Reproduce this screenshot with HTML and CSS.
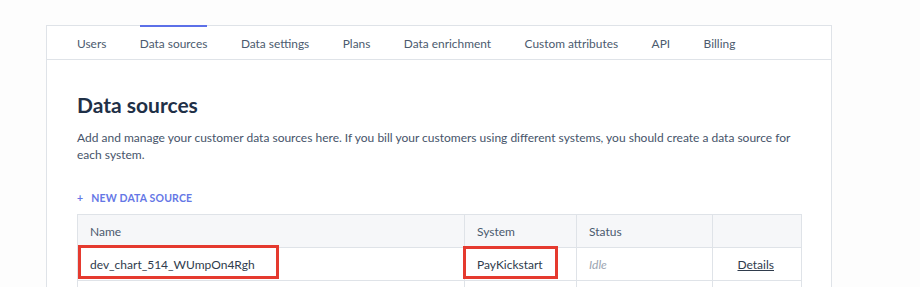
FILE: index.html
```html
<!DOCTYPE html>
<html>
<head>
<meta charset="utf-8">
<link rel="stylesheet" href="styles.css">
</head>
<body>
<div class="page">
  <div class="card">
    <nav class="tabs">
      <span class="tab">Users</span>
      <span class="tab active">Data sources</span>
      <span class="tab">Data settings</span>
      <span class="tab">Plans</span>
      <span class="tab">Data enrichment</span>
      <span class="tab">Custom attributes</span>
      <span class="tab">API</span>
      <span class="tab">Billing</span>
    </nav>
    <div class="content">
      <h1 class="title">Data sources</h1>
      <p class="desc">Add and manage your customer data sources here. If you bill your customers using different systems, you should create a data source for each system.</p>
      <div class="new-btn"><span class="plus">+</span>NEW DATA SOURCE</div>
      <div class="table-wrap">
        <table class="table">
          <colgroup>
            <col class="c-name"><col class="c-system"><col class="c-status"><col class="c-actions">
          </colgroup>
          <thead>
            <tr><th>Name</th><th>System</th><th>Status</th><th></th></tr>
          </thead>
          <tbody>
            <tr>
              <td>dev_chart_514_WUmpOn4Rgh</td>
              <td>PayKickstart</td>
              <td class="idle">Idle</td>
              <td class="actions"><a class="details">Details</a></td>
            </tr>
            <tr><td></td><td></td><td></td><td></td></tr>
          </tbody>
        </table>
        <div class="mark mark-name"></div>
        <div class="mark mark-system"></div>
      </div>
    </div>
  </div>
</div>
</body>
</html>
```

FILE: styles.css
```css
* { box-sizing: border-box; }
html, body { margin: 0; padding: 0; }
body {
  background: #fdfdfd;
  font-family: "Lato", "Noto Sans", sans-serif;
  color: #2f3b4c;
  overflow: hidden;
  height: 287px;
}
.page {
  padding: 25px 0 0 46px;
}
.card {
  width: 786px;
  background: #fff;
  border: 1px solid #dfe3e8;
  border-bottom: none;
  height: 262px;
}
.tabs {
  display: flex;
  gap: 33.5px;
  height: 35px;
  padding-left: 30px;
  border-bottom: 1px solid #dfe3e8;
  margin-top: -1px;
}
.tab {
  font-size: 11.9px;
  color: #4b5a6e;
  border-top: 2px solid transparent;
  display: flex;
  align-items: center;
  padding-top: 1px;
}
.tab.active {
  border-top-color: #5c70e8;
}
.content {
  padding: 0 30px;
}
.title {
  margin: 30px 0 0;
  font-size: 21px;
  font-weight: 700;
  color: #1f3047;
  line-height: 30px;
}
.desc {
  margin: 9px 0 0;
  font-size: 12px;
  line-height: 17px;
  color: #46546a;
}
.new-btn {
  margin-top: 28px;
  font-size: 10.5px;
  font-weight: 700;
  letter-spacing: 0.15px;
  color: #6577e6;
  line-height: 14px;
}
.plus {
  margin-right: 8px;
  font-weight: 700;
}
.table-wrap {
  position: relative;
  margin-top: 9px;
}
.table {
  width: 724px;
  border-collapse: collapse;
  table-layout: fixed;
  font-size: 12px;
}
.c-name { width: 387px; }
.c-system { width: 112px; }
.c-status { width: 136px; }
.c-actions { width: 89px; }
.table th, .table td {
  border: 1px solid #dfe3e8;
  height: 33px;
  padding: 0 12px;
  text-align: left;
}
.table th {
  background: #f6f7f9;
  font-weight: 400;
  color: #4b5a6e;
}
.table td { color: #2f3b4c; }
.table td.idle {
  color: #9aa3b0;
  font-style: italic;
}
.table td.actions {
  text-align: right;
  padding-right: 27px;
}
.details {
  color: #2f3b4c;
  text-decoration: underline;
}
.mark {
  position: absolute;
  border: 3px solid #e53a2f;
}
.mark-name {
  left: 1px;
  top: 31px;
  width: 201px;
  height: 34px;
}
.mark-system {
  left: 386px;
  top: 32px;
  width: 95px;
  height: 33px;
}
```
